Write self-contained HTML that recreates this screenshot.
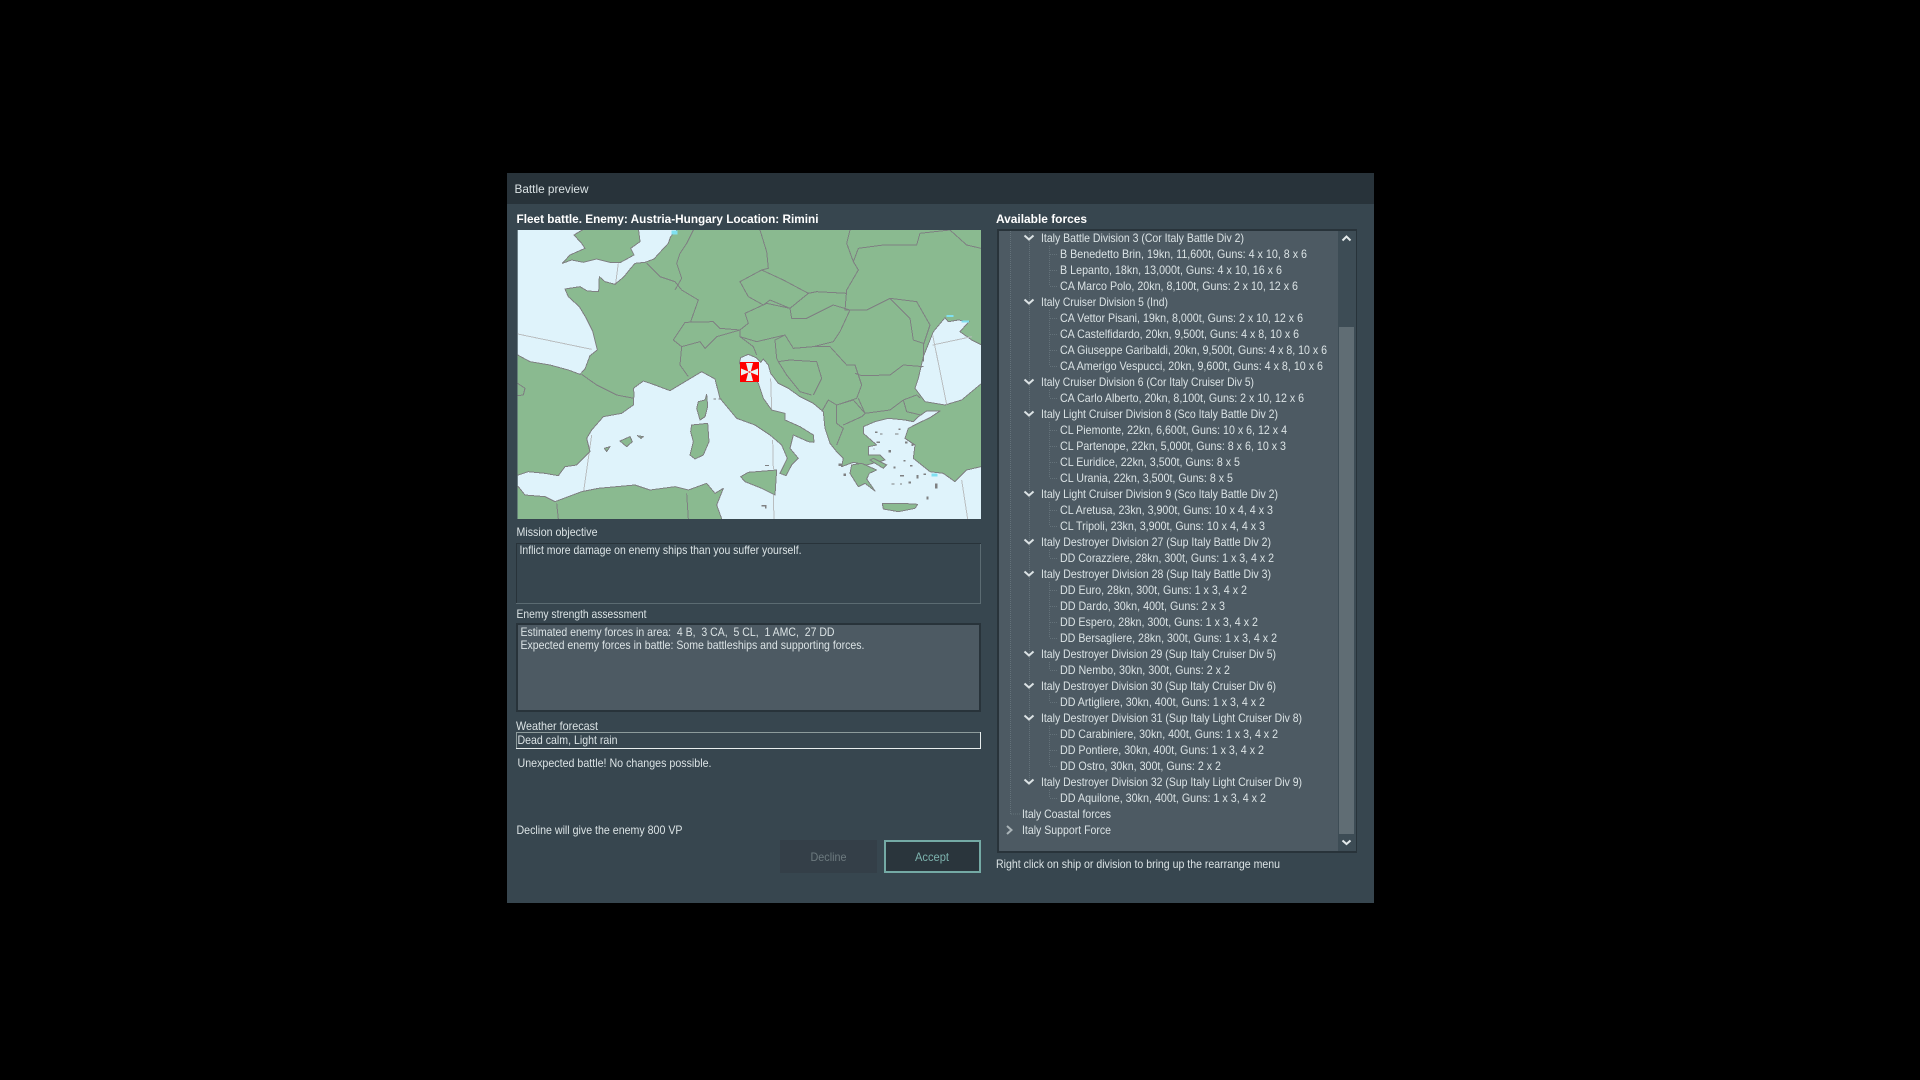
<!DOCTYPE html>
<html lang="en">
<head>
<meta charset="utf-8">
<title>Battle preview</title>
<style>
html,body{margin:0;padding:0;background:#000;width:1920px;height:1080px;overflow:hidden}
svg{display:block}
text{font-family:"Liberation Sans",sans-serif;font-size:12px;fill:#dbe3e5}
.b{font-weight:bold;fill:#fff}
.r{shape-rendering:crispEdges}
</style>
</head>
<body>
<svg width="1920" height="1080" viewBox="0 0 1920 1080" xmlns="http://www.w3.org/2000/svg">
<defs><clipPath id="mc"><rect x="53" y="195" width="1390" height="867"/></clipPath></defs>
<rect width="1920" height="1080" fill="#000"/>
<g class="r">
<rect x="507" y="173" width="867" height="730" fill="#37464f"/>
<rect x="507" y="173" width="867" height="31" fill="#28333a"/>
</g>
<text x="514.5" y="193" textLength="74" lengthAdjust="spacingAndGlyphs">Battle preview</text>
<text class="b" x="516.5" y="223" textLength="302" lengthAdjust="spacingAndGlyphs">Fleet battle. Enemy: Austria-Hungary Location: Rimini</text>
<text class="b" x="996" y="223" textLength="91" lengthAdjust="spacingAndGlyphs">Available forces</text>

<!-- Map -->
<g transform="translate(500,165) scale(.33333)">
<g clip-path="url(#mc)" class="r">
<rect x="53" y="195" width="1390" height="867" fill="#dff3fb"/>
<g fill="none" stroke="#b9bdbf" stroke-width="3">
<path d="M53 507L275 553M355 295L347 355M1298 510L1340 718M1298 540L1415 515M812 640L815 735M818 825L820 912M820 990L822 1062M1385 945L1403 1062M275 810L250 985"/>
</g>
<g fill="#8aba90" stroke="#7f8082" stroke-width="3" stroke-linejoin="round">
<path d="M255 190L222 210L245 235L255 250L210 270L187 295L215 285L250 292L290 282L330 292L362 292L402 270L392 250L420 230L415 190Z"/>
<path d="M530 195L512 215L505 235L480 262L462 282L435 292L405 295L388 315L372 335L345 358L315 350L298 335L296 380L262 378L240 365L195 372L205 395L238 425L258 458L278 498L292 555L270 572L255 612L240 628L205 615L150 600L90 590L53 570L40 570L40 932L55 930L85 920L135 925L175 932L195 905L230 900L270 860L260 820L275 795L310 755L365 745L400 720L402 685L400 670L430 648L465 660L510 677L555 650L605 620L645 642L660 700L710 760L765 780L810 810L845 840L862 880L840 925L858 932L875 900L895 880L870 850L880 810L925 830L942 832L940 810L900 785L855 765L855 745L815 735L790 700L775 655L755 630L718 595L722 578L745 568L768 578L782 592L790 582L805 600L812 625L835 655L865 670L900 695L940 715L970 740L975 790L990 835L1010 860L1030 880L1025 905L1060 892L1100 900L1155 885L1140 870L1105 870L1105 845L1130 840L1090 805L1090 785L1125 770L1165 760L1215 765L1240 770L1255 755L1280 738L1320 738L1290 758L1260 772L1225 790L1215 820L1245 840L1240 880L1290 920L1330 925L1365 950L1400 915L1443 905L1460 905L1460 180L530 180Z"/>
<path d="M1050 925L1055 900L1085 895L1130 915L1108 925L1100 942L1125 978L1095 955L1075 965Z"/>
<path d="M620 688L615 705L595 710L590 730L600 765L615 755L623 725Z"/>
<path d="M575 780L623 775L627 830L610 870L585 882L570 870L580 830L572 800Z"/>
<path d="M360 828L390 815L397 830L380 845Z"/>
<path d="M412 812L430 815L423 820Z"/>
<path d="M313 850L330 845L320 860Z"/>
<path d="M722 935L745 922L830 915L825 990L785 970L735 950Z"/>
<path d="M1147 1015L1205 1015L1253 1018L1245 1030L1195 1040L1150 1032Z"/>
<path d="M55 965L75 990L135 995L165 1010L245 980L295 970L405 960L450 975L525 965L565 975L620 955L645 985L670 970L650 1020L670 1075L40 1075L40 965Z"/>
</g>
<path d="M1335 458L1300 500L1290 525L1270 575L1255 640L1245 670L1275 710L1335 720L1385 705L1445 655L1445 540L1415 525L1380 500L1407 470L1375 465L1345 470Z" fill="#dff3fb" stroke="#7f8082" stroke-width="3"/>
<path d="M1298 510L1340 718M1298 540L1415 515" fill="none" stroke="#b9bdbf" stroke-width="3"/>
<!-- internal borders -->
<g fill="none" stroke="#7f8082" stroke-width="3" stroke-linejoin="round">
<path d="M580 195L560 235L540 265L530 295L545 340L525 375M440 295L480 335L525 350L545 375L595 405L572 470"/>
<path d="M520 525L555 472L640 470L660 490L720 495L745 475L735 445L800 415L870 430L875 460L920 460L1000 420L1050 435L1020 500L1000 530L940 545L880 550L855 510L770 530L720 515L760 545L770 570"/>
<path d="M520 525L545 545L600 530L615 550L650 515L720 495L720 515M545 545L540 600L565 635"/>
<path d="M780 195L800 260L805 310L785 315L720 350L745 395L790 420L810 405L870 430L925 385L950 380L1040 385M785 315L850 345L925 385"/>
<path d="M1050 195L1040 235L1060 290L1075 315L1040 375L1035 435L1100 435L1170 400L1250 410L1290 480L1270 540L1270 590M1060 290L1075 250L1150 240L1250 240L1260 205L1350 195L1400 240L1443 250"/>
<path d="M1170 400L1230 460L1240 525L1270 535M855 510L825 525L830 580L835 590L870 585L950 590L965 640L940 690M835 590L860 630L900 680L935 690"/>
<path d="M940 545L990 545L1040 600L1065 600L1085 660L1070 700L1010 720L985 705L965 740M1065 625L1085 632L1170 630L1210 600L1270 605M1075 700L1095 745L1170 735L1210 705L1250 690L1262 700M1210 705L1220 740L1262 750"/>
<path d="M1010 720L1010 775L1030 790L1010 840M1010 720L1060 705L1095 745L1085 755L1030 780"/>
<path d="M245 628L290 660L350 690L402 700M53 655L75 670L70 690L53 692M175 1062L170 1015M565 1062L560 985"/>
</g>
<!-- small islands -->
<g fill="#7f8082">
<path d="M1125 800h8v4h-8zM1140 805h8v4h-8zM1185 805h10v4h-10zM1165 855h8v8h-8zM1195 790h6v5h-6zM1200 930h12v4h-12zM1175 955h8v4h-8zM1250 930h6v10h-6zM1305 955h8v15h-8zM1280 995h5v8h-5zM1235 835h6v8h-6zM1215 830h8v5h-8zM1210 885h7v5h-7zM1180 905h6v5h-6zM1230 900h8v4h-8zM1270 925h8v5h-8zM1200 955h6v4h-6zM1225 950h8v5h-8zM1130 830h10v4h-10zM1120 850h4v4h-4zM1015 895h12v8h-12zM1030 925h8v8h-8zM785 1020h15v5h-15zM795 1025h5v5h-5zM655 700h10v3h-10zM640 700h8v3h-8zM795 900h12v3h-12z"/>
</g>
<path d="M1120 880L1160 900L1150 910L1110 885Z" fill="#8aba90" stroke="#7f8082" stroke-width="3"/>
<g fill="#80e0f0"><path d="M515 197h18v12h-18zM1295 925h18v10h-18zM1385 466h22v6h-22zM1340 450h20v6h-20z"/></g>
</g>
</g>
<!-- Cross -->
<g class="r"><rect x="740" y="362" width="19" height="20" fill="#f00"/></g>
<path d="M749.5 372.700L748.500 372.700L746 363H753L750.500 372.700ZM749.500 371.300L748.500 371.300L746 381H753L750.500 371.300ZM749.500 372L741 368.500V375.500ZM749.500 372L758 368.500V375.500Z" fill="#e9f3f3"/>

<text x="516.5" y="536" textLength="81" lengthAdjust="spacingAndGlyphs">Mission objective</text>
<g class="r">
<rect x="516.5" y="543" width="464.5" height="61" fill="#37464f"/>
<path d="M516 543h465v1h-465zM516 543h1v61h-1z" fill="#28333a"/>
<path d="M516 603h465v1h-465zM980 544h1v60h-1z" fill="#5b6b72"/>
</g>
<text x="519.5" y="554" textLength="282" lengthAdjust="spacingAndGlyphs">Inflict more damage on enemy ships than you suffer yourself.</text>

<text x="516.5" y="618" textLength="130" lengthAdjust="spacingAndGlyphs">Enemy strength assessment</text>
<g class="r">
<rect x="516" y="623" width="465" height="89" fill="#28333a"/>
<rect x="518" y="625" width="461" height="85" fill="#4d5a63"/>
</g>
<text x="520.5" y="636" xml:space="preserve" textLength="314" lengthAdjust="spacingAndGlyphs">Estimated enemy forces in area:  4 B,  3 CA,  5 CL,  1 AMC,  27 DD</text>
<text x="520.5" y="649" textLength="344" lengthAdjust="spacingAndGlyphs">Expected enemy forces in battle: Some battleships and supporting forces.</text>

<text x="516" y="730" textLength="82" lengthAdjust="spacingAndGlyphs">Weather forecast</text>
<g class="r">
<path d="M516 732h465v1h-465zM516 732h1v17h-1z" fill="#8d9b9c"/>
<path d="M516 748h465v1h-465zM980 732h1v17h-1z" fill="#e8eeee"/>
</g>
<text x="517.5" y="744" textLength="100" lengthAdjust="spacingAndGlyphs">Dead calm, Light rain</text>
<text x="517.5" y="767" textLength="194" lengthAdjust="spacingAndGlyphs">Unexpected battle! No changes possible.</text>
<text x="516.5" y="834" textLength="166" lengthAdjust="spacingAndGlyphs">Decline will give the enemy 800 VP</text>

<g class="r">
<rect x="780" y="840" width="97" height="33" fill="#343f48"/>
<rect x="884" y="840" width="97" height="33" fill="#74aaa5"/>
<rect x="886" y="842" width="93" height="29" fill="#2a353c"/>
</g>
<text x="810.5" y="861" textLength="36" lengthAdjust="spacingAndGlyphs" style="fill:#6d7a7f">Decline</text>
<text x="915" y="861" textLength="34" lengthAdjust="spacingAndGlyphs" style="fill:#7db3ae">Accept</text>

<!-- Tree -->
<g class="r">
<rect x="997" y="229" width="360" height="624" fill="#28333a"/>
<rect x="999" y="231" width="339" height="620" fill="#4d5a63"/>
<rect x="1338" y="231" width="18" height="620" fill="#3d4c55"/>
<rect x="1339" y="327" width="15" height="507" fill="#606d74"/>
</g>
<path d="M1342.5 240.5L1346.5 236.5L1350.5 240.5M1342.5 840.5L1346.5 844L1350.5 840.5" fill="none" stroke="#e3e9ea" stroke-width="2"/>
<g fill="none" stroke="#64727a" stroke-dasharray="1 1" class="r">
<path d="M1010.5 231V814M1029.5 231V782M1011 814H1020"/>
<path d="M1049.5 246V286M1049.5 310V366M1049.5 390V398M1049.5 422V478M1049.5 502V526M1049.5 550V558M1049.5 582V638M1049.5 662V670M1049.5 694V702M1049.5 726V766M1049.5 790V798"/>
<path d="M1050 254.5H1058M1050 270.5H1058M1050 286.5H1058M1050 318.5H1058M1050 334.5H1058M1050 350.5H1058M1050 366.5H1058M1050 398.5H1058M1050 430.5H1058M1050 446.5H1058M1050 462.5H1058M1050 478.5H1058M1050 510.5H1058M1050 526.5H1058M1050 558.5H1058M1050 590.5H1058M1050 606.5H1058M1050 622.5H1058M1050 638.5H1058M1050 670.5H1058M1050 702.5H1058M1050 734.5H1058M1050 750.5H1058M1050 766.5H1058M1050 798.5H1058"/>
</g>
<path fill="none" stroke="#dbe2e4" stroke-width="2" d="M1024.5 235.5l4.5 4 4.5-4M1024.5 299.5l4.5 4 4.5-4M1024.5 379.5l4.5 4 4.5-4M1024.5 411.5l4.5 4 4.5-4M1024.5 491.5l4.5 4 4.5-4M1024.5 539.5l4.5 4 4.5-4M1024.5 571.5l4.5 4 4.5-4M1024.5 651.5l4.5 4 4.5-4M1024.5 683.5l4.5 4 4.5-4M1024.5 715.5l4.5 4 4.5-4M1024.5 779.5l4.5 4 4.5-4"/>
<path fill="none" stroke="#aab4b8" stroke-width="2" d="M1007 826l4.500 4-4.500 4"/>

<text x="1041" y="242" textLength="203" lengthAdjust="spacingAndGlyphs">Italy Battle Division 3 (Cor Italy Battle Div 2)</text>
<text x="1060" y="258" textLength="247" lengthAdjust="spacingAndGlyphs">B Benedetto Brin, 19kn, 11,600t, Guns: 4 x 10, 8 x 6</text>
<text x="1060" y="274" textLength="222" lengthAdjust="spacingAndGlyphs">B Lepanto, 18kn, 13,000t, Guns: 4 x 10, 16 x 6</text>
<text x="1060" y="290" textLength="238" lengthAdjust="spacingAndGlyphs">CA Marco Polo, 20kn, 8,100t, Guns: 2 x 10, 12 x 6</text>
<text x="1041" y="306" textLength="127" lengthAdjust="spacingAndGlyphs">Italy Cruiser Division 5 (Ind)</text>
<text x="1060" y="322" textLength="243" lengthAdjust="spacingAndGlyphs">CA Vettor Pisani, 19kn, 8,000t, Guns: 2 x 10, 12 x 6</text>
<text x="1060" y="338" textLength="239" lengthAdjust="spacingAndGlyphs">CA Castelfidardo, 20kn, 9,500t, Guns: 4 x 8, 10 x 6</text>
<text x="1060" y="354" textLength="267" lengthAdjust="spacingAndGlyphs">CA Giuseppe Garibaldi, 20kn, 9,500t, Guns: 4 x 8, 10 x 6</text>
<text x="1060" y="370" textLength="263" lengthAdjust="spacingAndGlyphs">CA Amerigo Vespucci, 20kn, 9,600t, Guns: 4 x 8, 10 x 6</text>
<text x="1041" y="386" textLength="213" lengthAdjust="spacingAndGlyphs">Italy Cruiser Division 6 (Cor Italy Cruiser Div 5)</text>
<text x="1060" y="402" textLength="244" lengthAdjust="spacingAndGlyphs">CA Carlo Alberto, 20kn, 8,100t, Guns: 2 x 10, 12 x 6</text>
<text x="1041" y="418" textLength="237" lengthAdjust="spacingAndGlyphs">Italy Light Cruiser Division 8 (Sco Italy Battle Div 2)</text>
<text x="1060" y="434" textLength="227" lengthAdjust="spacingAndGlyphs">CL Piemonte, 22kn, 6,600t, Guns: 10 x 6, 12 x 4</text>
<text x="1060" y="450" textLength="226" lengthAdjust="spacingAndGlyphs">CL Partenope, 22kn, 5,000t, Guns: 8 x 6, 10 x 3</text>
<text x="1060" y="466" textLength="180" lengthAdjust="spacingAndGlyphs">CL Euridice, 22kn, 3,500t, Guns: 8 x 5</text>
<text x="1060" y="482" textLength="173" lengthAdjust="spacingAndGlyphs">CL Urania, 22kn, 3,500t, Guns: 8 x 5</text>
<text x="1041" y="498" textLength="237" lengthAdjust="spacingAndGlyphs">Italy Light Cruiser Division 9 (Sco Italy Battle Div 2)</text>
<text x="1060" y="514" textLength="213" lengthAdjust="spacingAndGlyphs">CL Aretusa, 23kn, 3,900t, Guns: 10 x 4, 4 x 3</text>
<text x="1060" y="530" textLength="205" lengthAdjust="spacingAndGlyphs">CL Tripoli, 23kn, 3,900t, Guns: 10 x 4, 4 x 3</text>
<text x="1041" y="546" textLength="230" lengthAdjust="spacingAndGlyphs">Italy Destroyer Division 27 (Sup Italy Battle Div 2)</text>
<text x="1060" y="562" textLength="214" lengthAdjust="spacingAndGlyphs">DD Corazziere, 28kn, 300t, Guns: 1 x 3, 4 x 2</text>
<text x="1041" y="578" textLength="230" lengthAdjust="spacingAndGlyphs">Italy Destroyer Division 28 (Sup Italy Battle Div 3)</text>
<text x="1060" y="594" textLength="187" lengthAdjust="spacingAndGlyphs">DD Euro, 28kn, 300t, Guns: 1 x 3, 4 x 2</text>
<text x="1060" y="610" textLength="165" lengthAdjust="spacingAndGlyphs">DD Dardo, 30kn, 400t, Guns: 2 x 3</text>
<text x="1060" y="626" textLength="198" lengthAdjust="spacingAndGlyphs">DD Espero, 28kn, 300t, Guns: 1 x 3, 4 x 2</text>
<text x="1060" y="642" textLength="217" lengthAdjust="spacingAndGlyphs">DD Bersagliere, 28kn, 300t, Guns: 1 x 3, 4 x 2</text>
<text x="1041" y="658" textLength="235" lengthAdjust="spacingAndGlyphs">Italy Destroyer Division 29 (Sup Italy Cruiser Div 5)</text>
<text x="1060" y="674" textLength="170" lengthAdjust="spacingAndGlyphs">DD Nembo, 30kn, 300t, Guns: 2 x 2</text>
<text x="1041" y="690" textLength="235" lengthAdjust="spacingAndGlyphs">Italy Destroyer Division 30 (Sup Italy Cruiser Div 6)</text>
<text x="1060" y="706" textLength="205" lengthAdjust="spacingAndGlyphs">DD Artigliere, 30kn, 400t, Guns: 1 x 3, 4 x 2</text>
<text x="1041" y="722" textLength="261" lengthAdjust="spacingAndGlyphs">Italy Destroyer Division 31 (Sup Italy Light Cruiser Div 8)</text>
<text x="1060" y="738" textLength="218" lengthAdjust="spacingAndGlyphs">DD Carabiniere, 30kn, 400t, Guns: 1 x 3, 4 x 2</text>
<text x="1060" y="754" textLength="204" lengthAdjust="spacingAndGlyphs">DD Pontiere, 30kn, 400t, Guns: 1 x 3, 4 x 2</text>
<text x="1060" y="770" textLength="161" lengthAdjust="spacingAndGlyphs">DD Ostro, 30kn, 300t, Guns: 2 x 2</text>
<text x="1041" y="786" textLength="261" lengthAdjust="spacingAndGlyphs">Italy Destroyer Division 32 (Sup Italy Light Cruiser Div 9)</text>
<text x="1060" y="802" textLength="206" lengthAdjust="spacingAndGlyphs">DD Aquilone, 30kn, 400t, Guns: 1 x 3, 4 x 2</text>
<text x="1022" y="818" textLength="89" lengthAdjust="spacingAndGlyphs">Italy Coastal forces</text>
<text x="1022" y="834" textLength="89" lengthAdjust="spacingAndGlyphs">Italy Support Force</text>

<text x="996" y="868" textLength="284" lengthAdjust="spacingAndGlyphs">Right click on ship or division to bring up the rearrange menu</text>
</svg>
</body>
</html>
